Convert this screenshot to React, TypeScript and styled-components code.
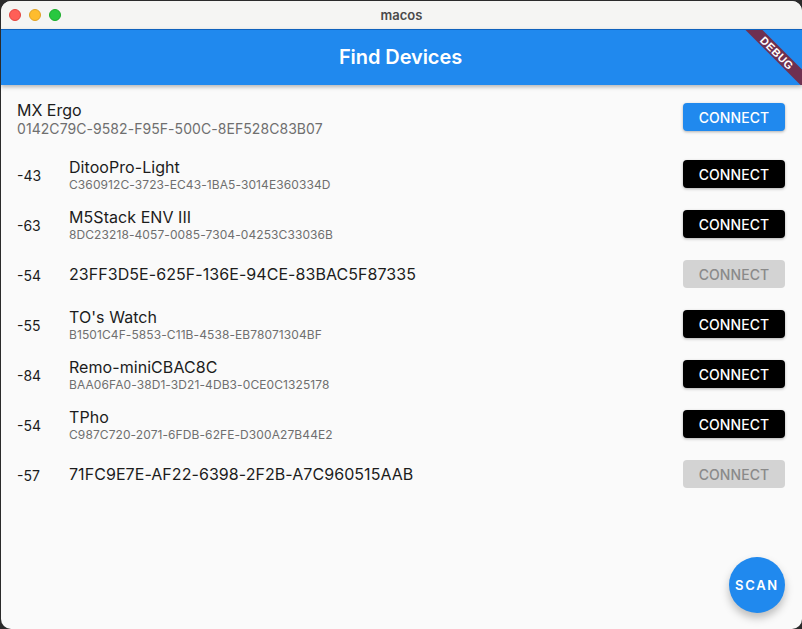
import styled, { createGlobalStyle } from "styled-components";

interface Device {
  rssi: string;
  name?: string;
  id: string;
}

const GlobalStyle = createGlobalStyle`
  html, body {
    margin: 0;
    padding: 0;
    width: 802px;
    height: 629px;
    overflow: hidden;
    background: #2b2b2b;
  }
`;

const Window = styled.div`
  display: flex;
  flex-direction: column;
  width: 801px;
  height: 628px;
  margin: 1px 0 0 1px;
  border-radius: 10px;
  overflow: hidden;
  background: #fafafa;
  font-family: Inter, "Noto Sans", sans-serif;
  color: #1c1c1c;
`;

const TitleBar = styled.div`
  position: relative;
  display: flex;
  align-items: center;
  justify-content: center;
  height: 28px;
  flex-shrink: 0;
  background: #f5f5f3;
  font-size: 13px;
  font-weight: 600;
  color: #4a4a4a;
`;

const Lights = styled.div`
  position: absolute;
  left: 8px;
  top: 8px;
  display: flex;
  gap: 8px;
`;

const Light = styled.span<{ $color: string; $edge: string }>`
  width: 12px;
  height: 12px;
  box-sizing: border-box;
  border-radius: 50%;
  background: ${({ $color }) => $color};
  border: 1px solid ${({ $edge }) => $edge};
`;

const AppBar = styled.header`
  position: relative;
  z-index: 1;
  display: flex;
  align-items: center;
  justify-content: center;
  height: 56px;
  padding-right: 2px;
  padding-bottom: 1px;
  box-sizing: border-box;
  flex-shrink: 0;
  border-top: 1px solid #0f62bd;
  background: #2089ee;
  box-shadow: 0 2px 4px rgba(0, 0, 0, 0.28);
  color: #fff;
  font-size: 20px;
  font-weight: 600;
  letter-spacing: -0.08px;
`;

const BannerClip = styled.div`
  position: absolute;
  inset: 0;
  overflow: hidden;
`;

const Banner = styled.div`
  position: absolute;
  top: 12px;
  right: -20px;
  width: 100px;
  height: 12px;
  box-sizing: border-box;
  padding-left: 14px;
  line-height: 12px;
  transform: rotate(45deg);
  background: #6f3050;
  color: #fff;
  text-align: center;
  font-family: "Liberation Sans", sans-serif;
  font-size: 11px;
  font-weight: 700;
  letter-spacing: 0.4px;
`;

const Content = styled.main`
  position: relative;
  flex: 1;
`;

const HeaderRow = styled.div`
  display: flex;
  align-items: center;
  justify-content: space-between;
  height: 65px;
  padding: 0 17px 0 16px;
`;

const DeviceRow = styled.div`
  display: flex;
  align-items: center;
  height: 50px;
  padding: 0 17px 0 16px;
`;

const Rssi = styled.div`
  width: 52px;
  font-size: 14px;
`;

const Info = styled.div`
  flex: 1;
  display: flex;
  flex-direction: column;
`;

const ConnectedInfo = styled(Info)`
  padding-top: 3px;
`;

const ConnectedName = styled.div`
  font-size: 16px;
  line-height: 20px;
`;

const ConnectedId = styled.div`
  font-size: 14px;
  line-height: 18px;
  letter-spacing: 0.06px;
  color: #6f6f6f;
`;

const Name = styled.div`
  font-size: 16px;
  line-height: 20px;
  letter-spacing: 0.06px;
`;

const LoneId = styled(Name)`
  margin-bottom: 2px;
`;

const Sub = styled.div`
  font-size: 12px;
  line-height: 16px;
  letter-spacing: 0.09px;
  color: #6f6f6f;
`;

const ConnectButton = styled.button<{ $variant: "primary" | "dark" | "off" }>`
  width: 102px;
  height: 28px;
  margin-bottom: ${({ $variant }) => ($variant === "primary" ? "1px" : "2px")};
  padding: 0;
  border: 0;
  border-radius: 4px;
  font-family: Inter, "Noto Sans", sans-serif;
  font-size: 14px;
  font-weight: 500;
  letter-spacing: 0.1px;
  background: ${({ $variant }) =>
    $variant === "primary" ? "#2089ee" : $variant === "dark" ? "#000" : "#d3d3d3"};
  color: ${({ $variant }) => ($variant === "off" ? "#8a8a8a" : "#fff")};
  box-shadow: ${({ $variant }) =>
    $variant === "off" ? "none" : "0 1px 3px rgba(0, 0, 0, 0.3)"};
`;

const ScanButton = styled.button`
  position: absolute;
  right: 17px;
  bottom: 16px;
  width: 56px;
  height: 56px;
  padding: 0;
  border: 0;
  border-radius: 50%;
  background: #2089ee;
  color: #fff;
  font-family: Inter, "Noto Sans", sans-serif;
  font-size: 13px;
  font-weight: 600;
  letter-spacing: 1.7px;
  box-shadow: 0 5px 8px rgba(0, 0, 0, 0.25);
`;

const devices: Device[] = [
  { rssi: "-43", name: "DitooPro-Light", id: "C360912C-3723-EC43-1BA5-3014E360334D" },
  { rssi: "-63", name: "M5Stack ENV III", id: "8DC23218-4057-0085-7304-04253C33036B" },
  { rssi: "-54", id: "23FF3D5E-625F-136E-94CE-83BAC5F87335" },
  { rssi: "-55", name: "TO's Watch", id: "B1501C4F-5853-C11B-4538-EB78071304BF" },
  { rssi: "-84", name: "Remo-miniCBAC8C", id: "BAA06FA0-38D1-3D21-4DB3-0CE0C1325178" },
  { rssi: "-54", name: "TPho", id: "C987C720-2071-6FDB-62FE-D300A27B44E2" },
  { rssi: "-57", id: "71FC9E7E-AF22-6398-2F2B-A7C960515AAB" },
];

const App = () => {
  return (
    <>
      <GlobalStyle />
      <Window>
        <TitleBar>
          <Lights>
            <Light $color="#ff5f57" $edge="#e0443e" />
            <Light $color="#febc2e" $edge="#dea123" />
            <Light $color="#28c840" $edge="#1aab29" />
          </Lights>
          macos
        </TitleBar>
        <AppBar>
          Find Devices
          <BannerClip>
            <Banner>DEBUG</Banner>
          </BannerClip>
        </AppBar>
        <Content>
          <HeaderRow>
            <ConnectedInfo>
              <ConnectedName>MX Ergo</ConnectedName>
              <ConnectedId>0142C79C-9582-F95F-500C-8EF528C83B07</ConnectedId>
            </ConnectedInfo>
            <ConnectButton $variant="primary">CONNECT</ConnectButton>
          </HeaderRow>
          {devices.map((device) => (
            <DeviceRow key={device.id}>
              <Rssi>{device.rssi}</Rssi>
              <Info>
                {device.name ? (
                  <>
                    <Name>{device.name}</Name>
                    <Sub>{device.id}</Sub>
                  </>
                ) : (
                  <LoneId>{device.id}</LoneId>
                )}
              </Info>
              <ConnectButton $variant={device.name ? "dark" : "off"}>CONNECT</ConnectButton>
            </DeviceRow>
          ))}
          <ScanButton>SCAN</ScanButton>
        </Content>
      </Window>
    </>
  );
};

export default App;
